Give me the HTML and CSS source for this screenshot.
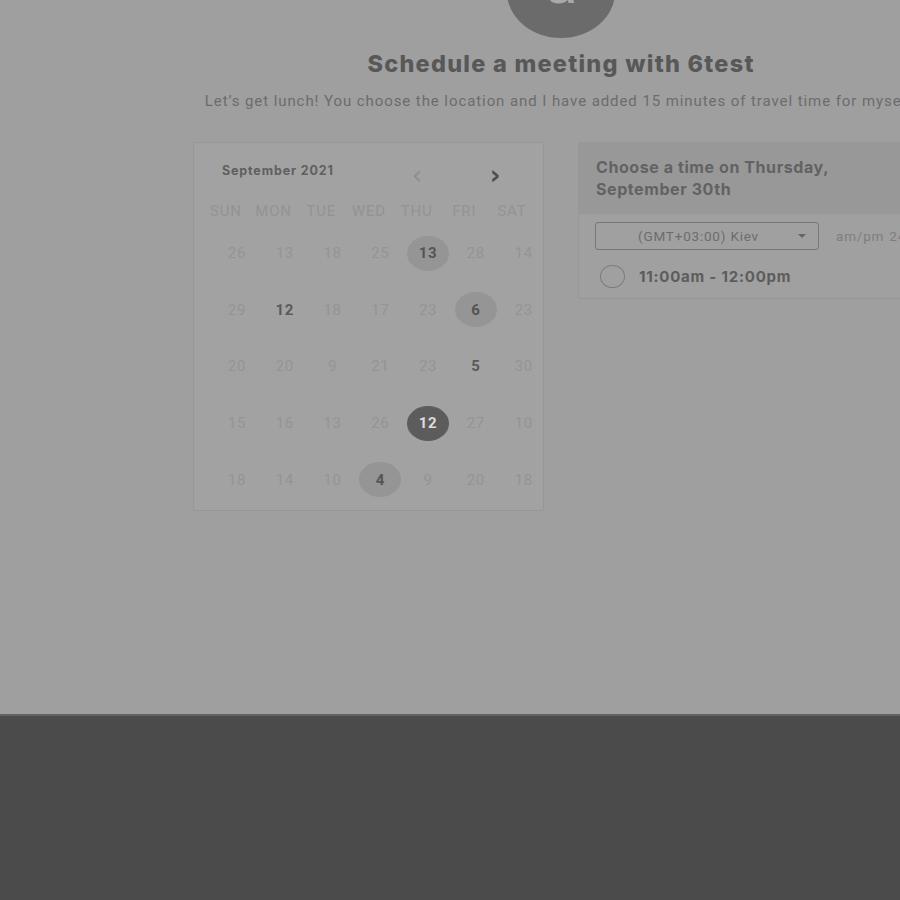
FILE: index.html
```html
<!DOCTYPE html>
<html lang="en">
<head>
<meta charset="utf-8">
<title>Schedule a meeting with 6test</title>
<link rel="stylesheet" href="styles.css">
</head>
<body>
<div class="page">
  <main class="content">
    <div class="avatar"><span class="avatar-letter">a</span></div>
    <h1 class="title">Schedule a meeting with 6test</h1>
    <p class="desc">Let’s get lunch! You choose the location and I have added 15 minutes of travel time for myself.</p>
    <div class="panels">
      <section class="calendar">
        <div class="cal-head">
          <span class="month">September 2021</span>
          <div class="nav">
            <span class="nav-btn prev">&lsaquo;</span>
            <span class="nav-btn next">&rsaquo;</span>
          </div>
        </div>
        <div class="weekdays">
          <span>SUN</span><span>MON</span><span>TUE</span><span>WED</span><span>THU</span><span>FRI</span><span>SAT</span>
        </div>
        <div class="days">
          <span class="day">26</span><span class="day">13</span><span class="day">18</span><span class="day">25</span><span class="day"><b class="dot avail">13</b></span><span class="day">28</span><span class="day">14</span>
          <span class="day">29</span><span class="day strong">12</span><span class="day">18</span><span class="day">17</span><span class="day">23</span><span class="day"><b class="dot avail">6</b></span><span class="day">23</span>
          <span class="day">20</span><span class="day">20</span><span class="day">9</span><span class="day">21</span><span class="day">23</span><span class="day strong">5</span><span class="day">30</span>
          <span class="day">15</span><span class="day">16</span><span class="day">13</span><span class="day">26</span><span class="day"><b class="dot selected">12</b></span><span class="day">27</span><span class="day">10</span>
          <span class="day">18</span><span class="day">14</span><span class="day">10</span><span class="day"><b class="dot avail">4</b></span><span class="day">9</span><span class="day">20</span><span class="day">18</span>
        </div>
      </section>
      <section class="times">
        <div class="times-head">Choose a time on Thursday,<br>September 30th</div>
        <div class="times-tools">
          <div class="select"><span class="select-text">(GMT+03:00) Kiev</span><span class="caret"></span></div>
          <span class="fmt">am/pm 24h</span>
        </div>
        <label class="slot"><span class="radio"></span><span class="slot-text">11:00am - 12:00pm</span></label>
      </section>
    </div>
  </main>
</div>
<footer class="footer"></footer>
</body>
</html>
```
FILE: styles.css
```css
html, body {
  margin: 0;
  padding: 0;
}
body {
  width: 900px;
  height: 900px;
  overflow: hidden;
  background: #4b4b4b;
  font-family: Roboto, "Liberation Sans", sans-serif;
}
.page {
  height: 714px;
  background: #9f9f9f;
  overflow: hidden;
}
.content {
  width: 1122px;
  display: flex;
  flex-direction: column;
  align-items: center;
}
.avatar {
  width: 108px;
  height: 92px;
  margin-top: -54px;
  border-radius: 50%;
  background: #6b6b6b;
  display: flex;
  align-items: flex-end;
  justify-content: center;
}
.avatar-letter {
  font-family: Roboto, sans-serif;
  font-size: 52px;
  line-height: 1;
  color: #a9a9a9;
  margin-bottom: 26px;
  transform: scaleX(1.15);
}
.title {
  margin: 12px 0 0;
  font-family: Inter, Roboto, sans-serif;
  font-weight: 800;
  font-size: 23.5px;
  line-height: 28px;
  color: #585858;
  letter-spacing: 1.25px;
}
.desc {
  margin: 13px 0 0;
  font-size: 15px;
  line-height: 20px;
  color: #6c6c6c;
  white-space: nowrap;
  letter-spacing: 0.92px;
}
.panels {
  margin-top: 31px;
  display: flex;
  gap: 34px;
  align-items: flex-start;
}
.calendar {
  box-sizing: border-box;
  width: 351px;
  height: 369px;
  background: #a2a2a2;
  border: 1px solid #979797;
  border-radius: 2px;
}
.cal-head {
  height: 55px;
  display: flex;
  align-items: center;
  padding: 0 33px 0 28px;
}
.month {
  font-family: Inter, Roboto, sans-serif;
  font-weight: 700;
  font-size: 12.5px;
  color: #5f5f5f;
  letter-spacing: 0.85px;
}
.nav {
  margin-left: auto;
  margin-top: 8px;
  display: flex;
  gap: 48px;
}
.nav-btn {
  width: 30px;
  text-align: center;
  font-size: 26px;
  line-height: 20px;
  font-family: "DejaVu Sans", sans-serif;
}
.prev { color: #8d8d8d; }
.next { color: #4e4e4e; font-weight: 700; }
.weekdays {
  height: 26px;
  padding-left: 8px;
  display: grid;
  grid-template-columns: repeat(7, 47.7px);
  align-items: center;
  font-size: 15px;
  color: #939393;
  letter-spacing: 0.8px;
}
.weekdays span {
  text-align: center;
}
.days {
  margin-top: 1px;
  padding-left: 19px;
  display: grid;
  grid-template-columns: repeat(7, 47.8px);
  grid-auto-rows: 56.6px;
  font-size: 15px;
  color: #949494;
  letter-spacing: 0.6px;
}
.day {
  display: flex;
  align-items: center;
  justify-content: center;
}
.strong {
  color: #5a5a5a;
  font-weight: 700;
}
.dot {
  width: 42px;
  height: 35px;
  border-radius: 50%;
  display: flex;
  align-items: center;
  justify-content: center;
  font-weight: 700;
}
.avail {
  background: #959595;
  color: #545454;
}
.selected {
  background: #5c5c5c;
  color: #dcdcdc;
}
.times {
  box-sizing: border-box;
  width: 351px;
  height: 157px;
  background: #a0a0a0;
  border: 1px solid #979797;
  border-radius: 2px;
}
.times-head {
  height: 71px;
  box-sizing: border-box;
  padding: 13px 0 0 17px;
  background: #989898;
  font-family: Inter, Roboto, sans-serif;
  font-weight: 700;
  font-size: 16px;
  line-height: 22px;
  color: #626262;
  letter-spacing: 0.58px;
}
.times-tools {
  display: flex;
  align-items: center;
  padding: 8px 0 0 16px;
  gap: 17px;
  white-space: nowrap;
}
.select {
  box-sizing: border-box;
  width: 224px;
  height: 28px;
  border: 1px solid #777777;
  border-radius: 3px;
  display: flex;
  align-items: center;
  padding: 0 12px 0 42px;
  font-size: 13.5px;
  color: #6c6c6c;
  letter-spacing: 0.8px;
}
.caret {
  margin-left: auto;
  width: 0;
  height: 0;
  border-left: 4px solid transparent;
  border-right: 4px solid transparent;
  border-top: 4px solid #666666;
}
.fmt {
  font-size: 13.5px;
  color: #7e7e7e;
  letter-spacing: 0.8px;
  word-spacing: 1px;
}
.slot {
  display: flex;
  align-items: center;
  padding: 15px 0 0 21px;
  gap: 14px;
}
.radio {
  box-sizing: border-box;
  width: 25px;
  height: 23px;
  border: 1.5px solid #7c7c7c;
  border-radius: 50%;
}
.slot-text {
  font-family: Inter, Roboto, sans-serif;
  font-weight: 700;
  font-size: 15px;
  color: #5c5c5c;
  letter-spacing: 0.78px;
}
.footer {
  height: 186px;
  box-sizing: border-box;
  border-top: 2px solid #626262;
  background: #4b4b4b;
}
```
